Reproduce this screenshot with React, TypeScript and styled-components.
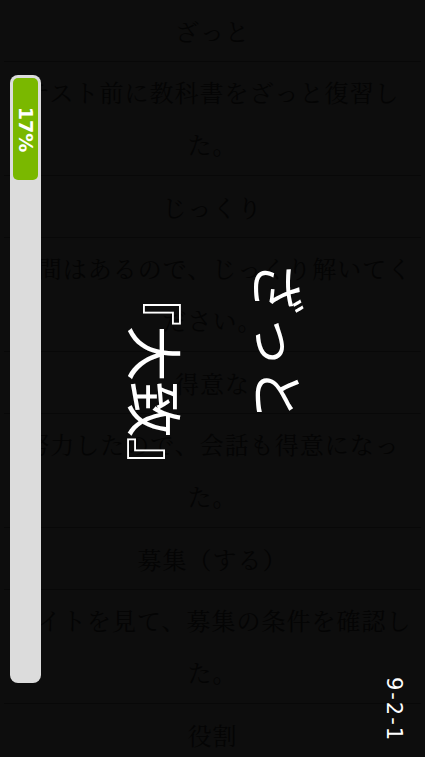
import React from "react";
import styled, { createGlobalStyle } from "styled-components";

const GlobalStyle = createGlobalStyle`
  html, body {
    margin: 0;
    padding: 0;
    background: #0d0d0d;
    overflow: hidden;
  }
  * { box-sizing: border-box; }
`;

const Screen = styled.div`
  position: relative;
  width: 100vw;
  height: 100vh;
  overflow: hidden;
  background: #0d0d0d;
  font-family: "Noto Sans CJK JP", "Noto Sans", sans-serif;
`;

const List = styled.div`
  display: flex;
  flex-direction: column;
  padding: 0 4px;
`;

const Row = styled.div<{ $kind: "word" | "sentence" }>`
  display: flex;
  align-items: center;
  justify-content: center;
  text-align: center;
  border-bottom: 1px solid #080808;
  color: #040404;
  font-family: "Noto Serif CJK JP", "Noto Sans CJK JP", serif;
  font-size: 24px;
  letter-spacing: 1px;
  line-height: ${(p) => (p.$kind === "word" ? "61px" : "52px")};
  min-height: ${(p) => (p.$kind === "word" ? "62px" : "114px")};
  padding: ${(p) => (p.$kind === "word" ? "0" : "4px 0 5px")};
`;

const ProgressTrack = styled.div`
  position: absolute;
  left: 10px;
  top: 75px;
  width: 31px;
  height: 608px;
  padding: 3px;
  background: #dcdcdc;
  border-radius: 8px;
  display: flex;
  flex-direction: column;
`;

const ProgressFill = styled.div`
  width: 100%;
  background: #7ab800;
  border-radius: 5px;
  display: flex;
  align-items: center;
  justify-content: center;
`;

const ProgressLabel = styled.span`
  transform: rotate(90deg);
  white-space: nowrap;
  color: #ffffff;
  font-family: "DejaVu Sans", sans-serif;
  font-weight: 700;
  font-size: 19px;
  line-height: 1;
`;

const PageTag = styled.div`
  position: absolute;
  right: 16px;
  bottom: 8px;
  width: 30px;
  height: 80px;
  display: flex;
  align-items: center;
  justify-content: center;
`;

const PageText = styled.span`
  transform: rotate(90deg);
  white-space: nowrap;
  color: #ffffff;
  font-family: "DejaVu Sans", sans-serif;
  font-size: 21px;
  letter-spacing: 2px;
  line-height: 1;
`;

const Overlay = styled.div`
  position: absolute;
  inset: 0;
  display: flex;
  align-items: center;
  justify-content: center;
  pointer-events: none;
`;

const Flashcard = styled.div`
  width: 204px;
  display: flex;
  flex-direction: column;
  gap: 63px;
  transform: translate(5px, -15px) rotate(90deg);
  color: #ffffff;
  font-family: "Noto Sans CJK JP", sans-serif;
  font-weight: 400;
`;

const Term = styled.div`
  font-size: 53px;
  line-height: 60px;
  text-align: left;
  white-space: nowrap;
`;

const Meaning = styled.div`
  font-size: 56px;
  line-height: 60px;
  text-align: right;
  white-space: nowrap;
  font-feature-settings: "palt";
`;

const items: { kind: "word" | "sentence"; text: string }[] = [
  { kind: "word", text: "ざっと" },
  { kind: "sentence", text: "テスト前に教科書をざっと復習した。" },
  { kind: "word", text: "じっくり" },
  { kind: "sentence", text: "時間はあるので、じっくり解いてください。" },
  { kind: "word", text: "得意な" },
  { kind: "sentence", text: "努力したので、会話も得意になった。" },
  { kind: "word", text: "募集（する）" },
  { kind: "sentence", text: "サイトを見て、募集の条件を確認した。" },
  { kind: "word", text: "役割" },
];

export default function App() {
  const progress = 17;
  return (
    <>
      <GlobalStyle />
      <Screen>
        <List>
          {items.map((it, i) => (
            <Row key={i} $kind={it.kind}>
              <span>{it.text}</span>
            </Row>
          ))}
        </List>
        <Overlay>
          <Flashcard>
            <Term>ざっと</Term>
            <Meaning>『大致』</Meaning>
          </Flashcard>
        </Overlay>
        <ProgressTrack>
          <ProgressFill style={{ height: `${progress}%` }}>
            <ProgressLabel>{progress}%</ProgressLabel>
          </ProgressFill>
        </ProgressTrack>
        <PageTag>
          <PageText>9-2-1</PageText>
        </PageTag>
      </Screen>
    </>
  );
}
